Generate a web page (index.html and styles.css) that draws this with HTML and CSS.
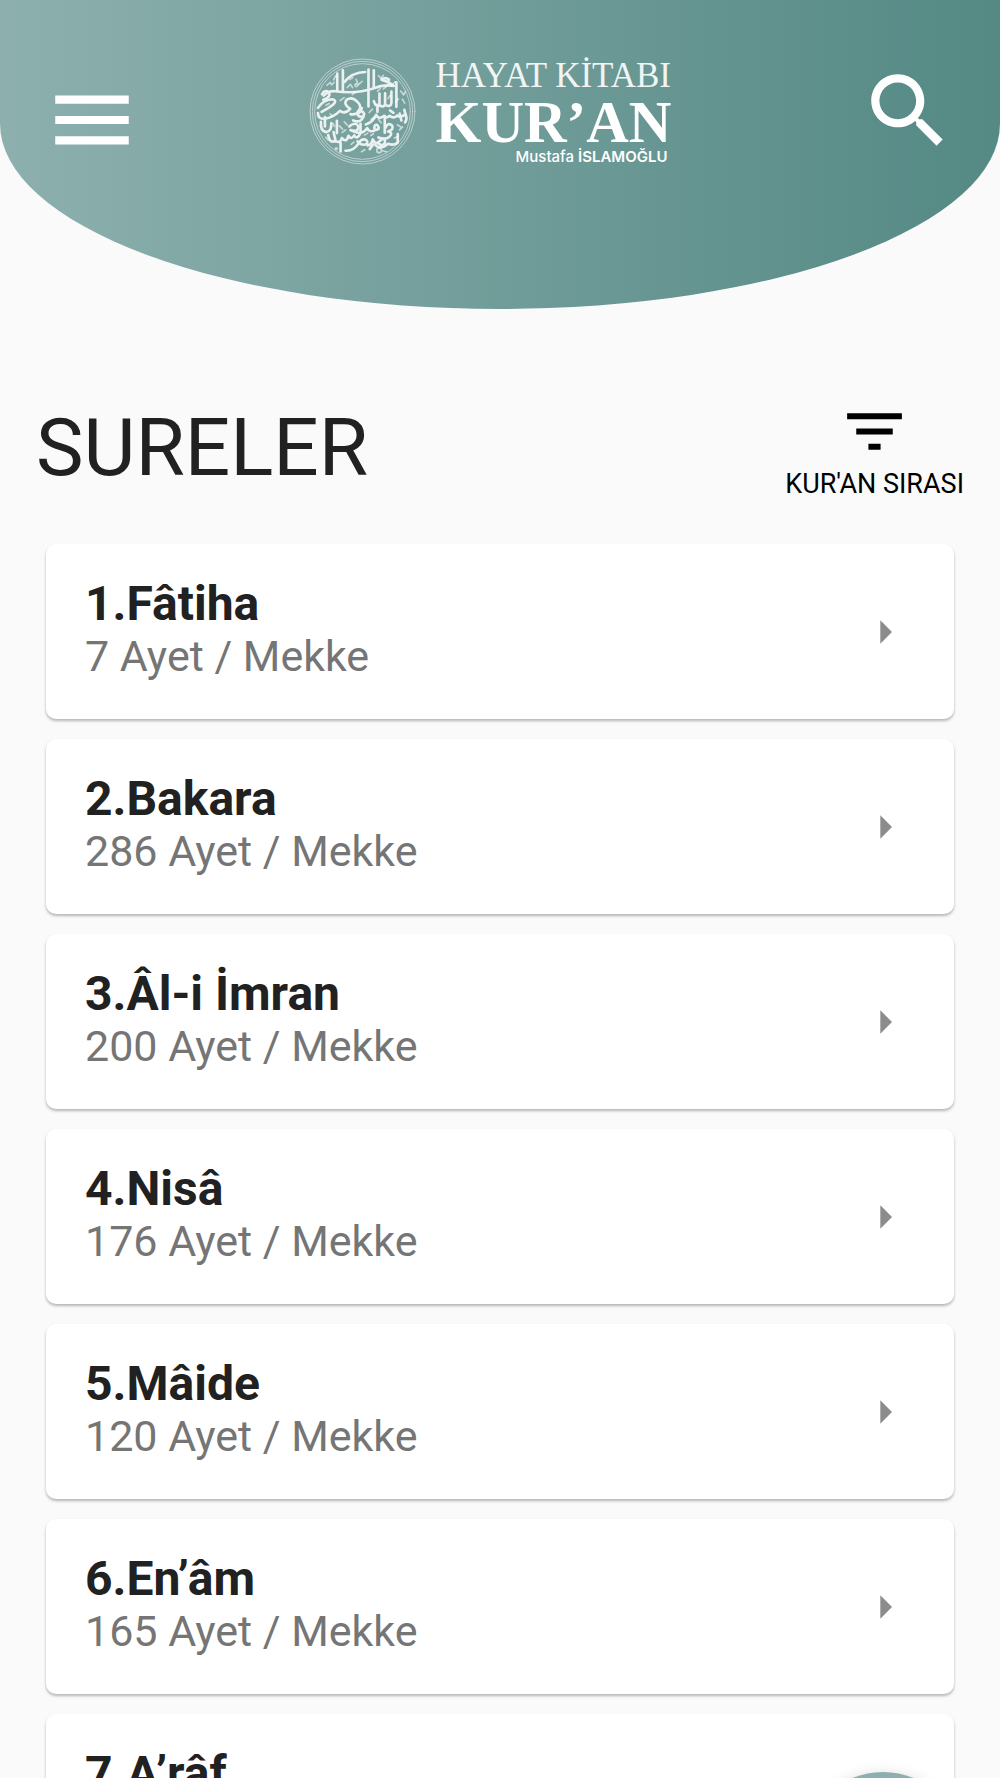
FILE: index.html
```html
<!DOCTYPE html>
<html lang="tr">
<head>
  <meta charset="UTF-8" />
  <title>Hayat Kitabı Kur’an - Sureler</title>
  <meta name="viewport" content="width=device-width, initial-scale=1" />
  <link rel="stylesheet" href="styles.css">
</head>
<body>
  <header class="header">
    <div class="header-bar">
      <button type="button" class="icon-btn menu-btn" aria-label="Menü">
        <svg viewBox="0 0 24 24"><path d="M3 18h18v-2H3v2zm0-5h18v-2H3v2zm0-7v2h18V6H3z"/></svg>
      </button>

      <a href="#" class="logo">
        <svg class="emblem" viewBox="24 19 322 322" aria-hidden="true">
          <g class="rings">
            <circle cx="185" cy="180" r="158"/>
            <circle cx="185" cy="180" r="151"/>
            <circle cx="185" cy="180" r="144"/>
          </g>
          <g class="strokes">
            <path d="M109 66V118M126 56V121M203 54V165M219 56V108M287 92V166"/>
            <path d="M68 132Q84 117 103 119Q166 128 219 110Q247 98 280 103Q264 90 242 84Q253 75 265 84"/>
            <path d="M131 91Q153 62 193 61M63 128Q70 113 84 122Q91 137 67 145"/>
            <path d="M51 169Q66 145 94 143Q109 146 98 158Q82 171 62 181"/>
            <path d="M51 185Q51 204 73 202Q99 196 117 178Q132 190 148 172Q126 158 137 145Q153 133 170 151Q186 167 171 180"/>
            <path d="M149 188Q172 192 183 170M157 207Q184 218 190 187Q183 173 172 186Q168 197 188 196"/>
            <path d="M219 149Q225 168 236 161V126M236 161Q249 170 253 158V125M254 160Q270 169 272 154V120"/>
            <path d="M195 219Q217 212 226 190Q234 206 250 193Q254 202 267 193Q278 203 290 192Q300 201 314 188L311 175"/>
            <path d="M297 186L302 207M314 188Q321 202 313 213M230 181V160M278 184L268 177"/>
            <path d="M60 211Q57 237 75 242Q93 240 91 215M72 225V197M108 208V245"/>
            <path d="M145 225Q165 208 173 226Q171 244 149 236Q183 255 199 230Q206 246 225 235Q240 234 229 220Q219 219 221 232"/>
            <path d="M252 194V244M254 229Q261 211 274 222Q281 235 262 240Q278 244 267 255Q254 267 233 258"/>
            <path d="M82 251Q86 278 104 268L98 242M103 268Q118 278 123 260M123 260Q136 276 143 253Q151 267 160 252Q169 266 179 245V217"/>
            <path d="M134 298Q158 300 173 276Q182 260 195 265Q207 276 190 280Q176 280 170 270"/>
            <path d="M200 282Q211 283 216 264Q225 284 239 267Q251 256 253 271Q250 286 235 278M224 281Q239 297 262 277Q279 284 291 273V248"/>
            <path d="M119 275V300M217 279L207 293"/>
          </g>
          <g class="marks">
            <path d="M78 101l10-9 4 8 8-8M98 85l6-12M139 108l9-10 7 10M166 83l6 17 12-11M146 84l10-6M233 72l7 8 8-9M271 103l12-12M300 118l9 12 5-10M305 143l7 12M154 129l10-7M118 147l12-9M75 161l10-5M88 187l6 8M205 183l10-10M248 112l9-7M262 141l6-9M230 119l8-8M293 142l-8 9M211 204l9-7M290 220l12 8M296 235l10-9M241 214l-8-11M115 223l10 10M130 211l9 9M124 243l10-8M74 257l7 9M151 279l8-7M191 251l10-6M210 252l8-5M281 260l10-5M245 298l12 3M182 301l10-6M101 225l-5-9"/>
            <circle cx="235" cy="297" r="7"/>
            <circle cx="166" cy="101" r="4"/>
            <circle cx="106" cy="292" r="3"/>
          </g>
        </svg>
        <span class="logo-text">
          <span class="logo-top">HAYAT KİTABI</span>
          <span class="logo-main">KUR’AN</span>
          <span class="logo-author">Mustafa <b>İSLAMOĞLU</b></span>
        </span>
      </a>

      <button type="button" class="icon-btn" aria-label="Ara">
        <svg viewBox="0 0 24 24"><path d="M15.5 14h-.79l-.28-.27C15.41 12.59 16 11.11 16 9.5 16 5.91 13.09 3 9.5 3S3 5.91 3 9.5 5.91 16 9.5 16c1.61 0 3.09-.59 4.23-1.57l.27.28v.79l5 4.99L20.49 19l-4.99-5zm-6 0C7.01 14 5 11.99 5 9.5S7.01 5 9.5 5 14 7.01 14 9.5 11.99 14 9.5 14z"/></svg>
      </button>
    </div>
  </header>

  <main>
    <div class="title-row">
      <h1>SURELER</h1>
      <button type="button" class="sort-btn">
        <svg viewBox="0 0 24 24"><path d="M10 18h4v-2h-4v2zM3 6v2h18V6H3zm3 7h12v-2H6v2z"/></svg>
        <span>KUR'AN SIRASI</span>
      </button>
    </div>

    <div class="sure-list">
      <a href="#" class="card">
        <div class="card-text">
          <h2>1.Fâtiha</h2>
          <p>7 Ayet / Mekke</p>
        </div>
        <svg class="arrow" viewBox="0 0 24 24"><path d="M10 17l5-5-5-5v10z"/></svg>
      </a>
      <a href="#" class="card">
        <div class="card-text">
          <h2>2.Bakara</h2>
          <p>286 Ayet / Mekke</p>
        </div>
        <svg class="arrow" viewBox="0 0 24 24"><path d="M10 17l5-5-5-5v10z"/></svg>
      </a>
      <a href="#" class="card">
        <div class="card-text">
          <h2>3.Âl-i İmran</h2>
          <p>200 Ayet / Mekke</p>
        </div>
        <svg class="arrow" viewBox="0 0 24 24"><path d="M10 17l5-5-5-5v10z"/></svg>
      </a>
      <a href="#" class="card">
        <div class="card-text">
          <h2>4.Nisâ</h2>
          <p>176 Ayet / Mekke</p>
        </div>
        <svg class="arrow" viewBox="0 0 24 24"><path d="M10 17l5-5-5-5v10z"/></svg>
      </a>
      <a href="#" class="card">
        <div class="card-text">
          <h2>5.Mâide</h2>
          <p>120 Ayet / Mekke</p>
        </div>
        <svg class="arrow" viewBox="0 0 24 24"><path d="M10 17l5-5-5-5v10z"/></svg>
      </a>
      <a href="#" class="card">
        <div class="card-text">
          <h2>6.En’âm</h2>
          <p>165 Ayet / Mekke</p>
        </div>
        <svg class="arrow" viewBox="0 0 24 24"><path d="M10 17l5-5-5-5v10z"/></svg>
      </a>
      <a href="#" class="card">
        <div class="card-text">
          <h2>7.A’râf</h2>
        </div>
      </a>
    </div>
  </main>

  <button type="button" class="fab" aria-label="Yukarı"></button>
</body>
</html>
```
FILE: styles.css
```css
:root {
  --green-light: #8db0ae;
  --green-dark: #548984;
  --text-color: #212121;
  --light-text: #757575;
  --background-color: #fafafa;
}

* {
  box-sizing: border-box;
  margin: 0;
  padding: 0;
}

body {
  font-family: Roboto, sans-serif;
  background: var(--background-color);
  color: var(--text-color);
  height: 100vh;
  overflow: hidden;
}

button {
  background: none;
  border: none;
  font-family: inherit;
  cursor: pointer;
}

a {
  color: inherit;
  text-decoration: none;
}

svg {
  display: block;
}

/* Header */
.header {
  padding: 53px 43px 140px;
  background: linear-gradient(90deg, var(--green-light) 0%, var(--green-dark) 100%);
  border-radius: 0 0 50% 50% / 0 0 60% 60%;
}

.header-bar {
  display: flex;
  justify-content: space-between;
  align-items: center;
  min-height: 116px;
}

.icon-btn svg {
  width: 98px;
  height: 98px;
  fill: #fff;
}

.menu-btn {
  align-self: flex-end;
}

.logo {
  display: flex;
  align-items: center;
  gap: 20px;
  padding-right: 20px;
  color: #fff;
}

.emblem {
  width: 107px;
  height: 107px;
  fill: none;
  stroke: #fff;
  stroke-linecap: round;
  stroke-linejoin: round;
}

.rings {
  stroke-width: 3;
  opacity: 0.5;
}

.strokes {
  stroke-width: 8;
  opacity: 0.85;
}

.marks {
  stroke-width: 5;
  opacity: 0.6;
}

.logo-text {
  display: flex;
  flex-direction: column;
  font-family: "Liberation Serif", serif;
  white-space: nowrap;
}

.logo-top {
  font-size: 35px;
  line-height: 42px;
  opacity: 0.9;
}

.logo-main {
  font-size: 59px;
  line-height: 50px;
  font-weight: 700;
}

.logo-author {
  padding-right: 4px;
  font-family: Inter, sans-serif;
  font-size: 15px;
  line-height: 20px;
  font-weight: 500;
  text-align: right;
}

.logo-author b {
  font-weight: 600;
}

/* Title */
.title-row {
  display: flex;
  justify-content: space-between;
  align-items: center;
  padding: 86px 36px 44px;
}

h1 {
  font-size: 80px;
  line-height: 94px;
  font-weight: 400;
}

.sort-btn {
  display: flex;
  flex-direction: column;
  align-items: center;
  font-size: 27px;
  line-height: 32px;
  color: #000;
}

.sort-btn svg {
  width: 73px;
  height: 73px;
}

/* Cards */
.sure-list {
  display: flex;
  flex-direction: column;
  gap: 20px;
  padding: 0 46px;
}

.card {
  display: flex;
  justify-content: space-between;
  align-items: center;
  padding: 0 41px 0 39px;
  background: #fff;
  border-radius: 10px;
  box-shadow: 0 2px 3px rgba(0, 0, 0, 0.28);
}

.card-text {
  padding: 32px 0 39px;
}

.card h2 {
  font-size: 48px;
  line-height: 56px;
  font-weight: 700;
}

.card p {
  font-size: 43px;
  line-height: 48px;
  color: var(--light-text);
}

.arrow {
  width: 56px;
  height: 56px;
  fill: #8c8c8c;
}

.fab {
  position: fixed;
  right: 37px;
  bottom: -154px;
  width: 160px;
  height: 160px;
  border-radius: 50%;
  background: var(--green-light);
  box-shadow: 0 4px 16px rgba(0, 0, 0, 0.2);
}
```
